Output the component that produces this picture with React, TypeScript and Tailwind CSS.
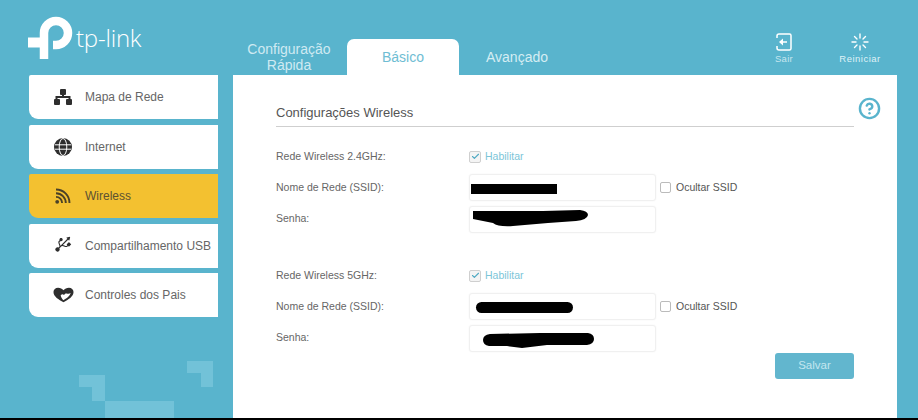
import { CircleHelp, Check } from "lucide-react";
import { FaUsb } from "react-icons/fa";

const menu = [
  { label: "Mapa de Rede", icon: "map" },
  { label: "Internet", icon: "globe" },
  { label: "Wireless", icon: "wifi" },
  { label: "Compartilhamento USB", icon: "usb" },
  { label: "Controles dos Pais", icon: "heart" },
];

const MenuIcon = ({ name }: { name: string }) => {
  if (name === "map")
    return (
      <svg width="18" height="16" viewBox="0 0 18 16" fill="#2e2e2e">
        <rect x="6" y="0" width="6" height="6" rx="1" />
        <rect x="0" y="10" width="6" height="6" rx="1" />
        <rect x="12" y="10" width="6" height="6" rx="1" />
        <path d="M8 5h2v2h6.500v4h-2V9h-11v2h-2V7H8z" />
      </svg>
    );
  if (name === "globe")
    return (
      <svg width="18" height="18" viewBox="0 0 18 18">
        <circle cx="9" cy="9" r="9" fill="#2e2e2e" />
        <path d="M1 6.800h16M1 11.200h16" stroke="#fff" strokeWidth="1" />
        <ellipse cx="9" cy="9" rx="3.800" ry="8.500" fill="none" stroke="#fff" strokeWidth="1" />
      </svg>
    );
  if (name === "wifi")
    return (
      <svg width="16" height="16" viewBox="0 0 16 16" fill="none" stroke="#4a4128" strokeWidth="1.900">
        <path d="M1 1.500c7.500 0 13.500 6 13.500 13.500" />
        <path d="M1 5.200c5.400 0 9.800 4.400 9.800 9.800" />
        <path d="M1 8.900c3.400 0 6.100 2.700 6.100 6.100" />
        <circle cx="2.200" cy="13.800" r="1.900" fill="#4a4128" stroke="none" />
      </svg>
    );
  if (name === "usb") return <FaUsb className="-translate-y-[2px] -rotate-45 text-[20px] text-[#2e2e2e]" />;
  return (
    <svg width="21" height="16" viewBox="0 0 22 16">
      <path d="M11 15.500C6 13 0.500 9.500 0.500 4.800 0.500 2 2.700 0.300 5.300 0.300c2.400 0 4.300 1 5.700 2.700 1.400-1.700 3.300-2.700 5.700-2.700 2.600 0 4.800 1.700 4.800 4.500 0 4.700-5.500 8.200-10.500 10.700z" fill="#2e2e2e" />
      <path d="M8 8.500c1-1.200 2.200-1.700 3.500-.6.800-1 1.500-1.800 2.800-1.500 1.500.3 2.900.4 4.200-.4-.4 2.300-3.800 5.600-7.500 7.400-1.200-.7-2.400-3-3-4.900z" fill="#fff" />
    </svg>
  );
};

const Label = ({ children }: { children: string }) => (
  <div className="w-[193px] shrink-0 text-[10.5px] text-[#666]">{children}</div>
);

const Field = ({ scribble }: { scribble: React.ReactNode }) => (
  <div className="relative h-[27px] w-[187px] shrink-0 rounded-[3px] border border-[#f0f0f0] bg-white shadow-[0_0_2px_#f4f4f4]">
    {scribble}
  </div>
);

const WifiBlock = ({
  title,
  ssid,
  pass,
}: {
  title: string;
  ssid: React.ReactNode;
  pass: React.ReactNode;
}) => (
  <div className="flex flex-col">
    <div className="flex h-[19px] items-center">
      <Label>{title}</Label>
      <span className="flex h-[12px] w-[12px] items-center justify-center rounded-[2px] border border-[#cfcfcf] bg-[#f4f4f4]">
        <Check size={9} strokeWidth={3} className="text-[#4fa9c2]" />
      </span>
      <span className="ml-[4px] text-[10.5px] text-[#7cc5d8]">Habilitar</span>
    </div>
    <div className="mt-[8px] flex items-center">
      <Label>Nome de Rede (SSID):</Label>
      <Field scribble={ssid} />
      <span className="ml-[4px] h-[11px] w-[11px] rounded-[2px] border border-[#bbb] bg-white" />
      <span className="ml-[5px] text-[10.5px] text-[#555]">Ocultar SSID</span>
    </div>
    <div className="mt-[4.500px] flex items-center">
      <Label>Senha:</Label>
      <Field scribble={pass} />
    </div>
  </div>
);

export default function App() {
  return (
    <div className="relative flex h-[420px] w-[918px] flex-col overflow-hidden bg-[#59b4cd] font-['Liberation_Sans',Arial,sans-serif]">
      <div className="flex h-[75px] shrink-0">
        <div className="flex w-[218px] shrink-0 items-start pl-[28px] pt-[16px]">
          <svg width="46" height="43" viewBox="0 0 46 43" fill="none" stroke="#fff" strokeWidth="8.500">
            <path d="M16 43V17a12 12 0 1 1 12 12h-3" />
            <path d="M0 26.500h20" strokeWidth="10" />
          </svg>
          <span className="ml-[2px] mt-[7px] font-['Open_Sans',sans-serif] text-[24px] font-light leading-[30px] tracking-[-0.2px] text-white">
            tp-link
          </span>
        </div>
        <div className="flex flex-1 items-end">
          <div className="ml-[15px] w-[112px] pb-[2px] text-center text-[14px] leading-[16px] text-[#cfeaf2]">
            Configuração
            <br />
            Rápida
          </div>
          <div className="ml-[2px] flex h-[36px] w-[112px] items-center justify-center rounded-t-[7px] bg-white text-[14px] text-[#6fbdd3]">
            Básico
          </div>
          <div className="flex h-[36px] w-[116px] items-center justify-center text-[14px] text-[#d5edf3]">
            Avançado
          </div>
          <div className="mb-[11px] ml-auto flex items-end">
            <div className="flex w-[40px] flex-col items-center">
              <svg width="16" height="18" viewBox="0 0 16 18" fill="none" stroke="#fff" strokeWidth="1.500">
                <path d="M1 5V3a2 2 0 0 1 2-2h10.500a1.500 1.500 0 0 1 1.500 1.500v13a1.500 1.500 0 0 1-1.500 1.500H3a2 2 0 0 1-2-2v-2" />
                <path d="M11 9H6" />
                <path d="M7 5.500L3 9l4 3.500z" fill="#fff" stroke="none" />
              </svg>
              <span className="mt-[3px] text-[9.5px] leading-[10px] tracking-[0.3px] text-[#c6e6ef]">Sair</span>
            </div>
            <div className="ml-[34px] mr-[36px] flex w-[44px] flex-col items-center">
              <svg width="18" height="18" viewBox="0 0 18 18" fill="none" stroke="#fff" strokeWidth="1.400" strokeLinecap="round">
                <path d="M9 1v4M9 13v4M1 9h4M13 9h4M3.500 3.500l2.500 2.500M12 12l2.500 2.500M14.500 3.500L12 6M6 12l-2.500 2.500" />
              </svg>
              <span className="mt-[3px] whitespace-nowrap text-[9.5px] leading-[10px] tracking-[0.5px] text-[#dff2f7]">Reiniciar</span>
            </div>
          </div>
        </div>
      </div>

      <div className="flex flex-1">
        <div className="ml-[29px] flex w-[189px] shrink-0 flex-col gap-[5.500px]">
          {menu.map((item) => (
            <div
              key={item.label}
              className={`flex h-[44px] items-center rounded-bl-[9px] rounded-tl-[2px] ${
                item.icon === "wifi" ? "bg-[#f3c130] text-[#5c5233]" : "bg-white text-[#666]"
              }`}
            >
              <div className="flex w-[56px] shrink-0 justify-center -translate-x-[-6px]">
                <MenuIcon name={item.icon} />
              </div>
              <span className="whitespace-nowrap text-[12px]">{item.label}</span>
            </div>
          ))}
        </div>

        <div className="relative ml-[15px] w-[664px] bg-white pl-[43px]">
          <div className="mt-[26px] flex h-[26px] w-[578px] items-center border-b border-[#cfcfcf] pt-[1px] pb-[2px] text-[13px] text-[#555]">
            Configurações Wireless
          </div>
          <CircleHelp
            size={23}
            strokeWidth={2.500}
            className="absolute left-[625px] top-[22px] text-[#59b4cd]"
          />
          <div className="mt-[20px]">
            <WifiBlock
              title="Rede Wireless 2.4GHz:"
              ssid={<div className="absolute left-[1px] top-[9px] h-[10px] w-[86px] bg-black" />}
              pass={
                <svg className="absolute left-[2px] top-[3px]" width="116" height="20" viewBox="0 0 116 20">
                  <path d="M1 1h70l37-1q8 1 8 5-1 5-12 6l-28 2-35 3q-15 1-20-3L1 9z" fill="#000" />
                </svg>
              }
            />
          </div>
          <div className="mt-[33.500px]">
            <WifiBlock
              title="Rede Wireless 5GHz:"
              ssid={<div className="absolute left-[6px] top-[8px] h-[11px] w-[97px] rounded-full bg-black" />}
              pass={
                <svg className="absolute left-[12px] top-[6px]" width="114" height="17" viewBox="0 0 114 17">
                  <path d="M8 2l50-1 48 0q6 1 6 6t-7 6l-40 0-25 3-15-2-18 0q-6-1-6-6t7-6z" fill="#000" />
                </svg>
              }
            />
          </div>
          <div className="mt-[1px] flex w-[578px] justify-end">
            <div className="flex h-[26px] w-[79px] items-center justify-center rounded-[3px] bg-[#62b6ce] text-[11.5px] text-[#c4e6ef]">
              Salvar
            </div>
          </div>
        </div>
      </div>

      <div className="h-[2px] shrink-0 bg-black" />

      <svg className="absolute left-[79px] top-[361px]" width="134" height="57" viewBox="0 0 134 57" fill="#72c2d8">
        <path d="M108 0h26v26h-12V12h-14z" />
        <path d="M0 14h26v26H13V26H0z" />
        <rect x="26" y="40" width="69" height="17" />
      </svg>
    </div>
  );
}
